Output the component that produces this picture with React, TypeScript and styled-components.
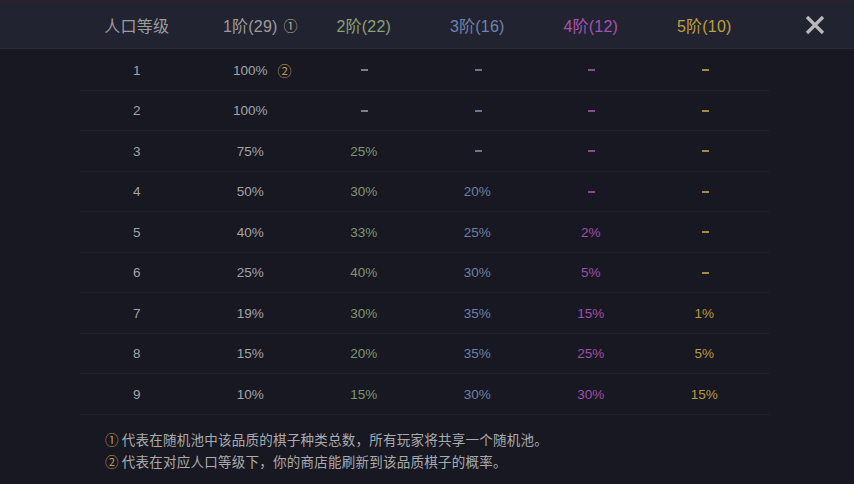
import styled, { createGlobalStyle } from 'styled-components';

const GlobalStyle = createGlobalStyle`
  body {
    margin: 0;
    background: #171821;
    font-family: 'Liberation Sans', 'Noto Sans CJK SC', sans-serif;
  }
`;

type Tier = 0 | 1 | 2 | 3 | 4 | 5;

const tierColors: Record<Tier, string> = {
  0: '#a4a4a6',
  1: '#a4a4a6',
  2: '#80966f',
  3: '#6c81a6',
  4: '#a14fa9',
  5: '#b89b3e',
};

const headColors: Record<Tier, string> = {
  0: '#9c9c9f',
  1: '#9c9c9f',
  2: '#8aa177',
  3: '#6d84ad',
  4: '#a852b0',
  5: '#bf9f3f',
};

const dashColors: Record<Tier, string> = {
  0: '#7d7d82',
  1: '#7d7d82',
  2: '#7d7d82',
  3: '#6a7690',
  4: '#8a4a93',
  5: '#a48c3e',
};

const heads = ['人口等级', '1阶(29)', '2阶(22)', '3阶(16)', '4阶(12)', '5阶(10)'];

const rows: string[][] = [
  ['1', '100%', '–', '–', '–', '–'],
  ['2', '100%', '–', '–', '–', '–'],
  ['3', '75%', '25%', '–', '–', '–'],
  ['4', '50%', '30%', '20%', '–', '–'],
  ['5', '40%', '33%', '25%', '2%', '–'],
  ['6', '25%', '40%', '30%', '5%', '–'],
  ['7', '19%', '30%', '35%', '15%', '1%'],
  ['8', '15%', '20%', '35%', '25%', '5%'],
  ['9', '10%', '15%', '30%', '30%', '15%'],
];

export default function App() {
  return (
    <>
      <GlobalStyle />
      <Page>
        <TopStrip />
        <Header>
          <HeadGrid>
            {heads.map((h, i) => (
              <HeadCell key={h} $tier={i as Tier}>
                <Value>
                  {h}
                  {i === 1 && <Mark $gold={false}>①</Mark>}
                </Value>
              </HeadCell>
            ))}
          </HeadGrid>
          <CloseButton aria-label="close">
            <svg width="22" height="22" viewBox="0 0 22 22">
              <path
                d="M3 3 L19 19 M19 3 L3 19"
                stroke="#b9b9bc"
                strokeWidth="3.2"
              />
            </svg>
          </CloseButton>
        </Header>
        <Table>
          {rows.map((r) => (
            <Row key={r[0]}>
              {r.map((v, i) => (
                <Cell key={i} $tier={i as Tier}>
                  {v === '–' ? (
                    <Dash $tier={i as Tier} />
                  ) : (
                    <Value>
                      {v}
                      {r[0] === '1' && i === 1 && <Mark $gold>②</Mark>}
                    </Value>
                  )}
                </Cell>
              ))}
            </Row>
          ))}
        </Table>
        <Notes>
          <Note>
            <NoteMark>①</NoteMark>代表在随机池中该品质的棋子种类总数，所有玩家将共享一个随机池。
          </Note>
          <Note>
            <NoteMark>②</NoteMark>代表在对应人口等级下，你的商店能刷新到该品质棋子的概率。
          </Note>
        </Notes>
      </Page>
    </>
  );
}

const Page = styled.div`
  width: 854px;
  height: 484px;
  overflow: hidden;
  background: #171821;
`;

const TopStrip = styled.div`
  height: 2px;
  background: #2b2129;
`;

const Header = styled.div`
  display: flex;
  align-items: center;
  height: 46px;
  background: #222330;
  border-bottom: 1px solid #2a2b38;
`;

const HeadGrid = styled.div`
  display: grid;
  grid-template-columns: repeat(6, 113.5px);
  margin-left: 80px;
`;

const HeadCell = styled.div<{ $tier: Tier }>`
  text-align: center;
  font-size: 16px;
  letter-spacing: 0.2px;
  color: ${(p) => headColors[p.$tier]};
`;

const Value = styled.span`
  position: relative;
  display: inline-block;
`;

const Mark = styled.span<{ $gold: boolean }>`
  position: absolute;
  left: 100%;
  top: 50%;
  transform: translateY(-50%);
  margin-left: ${(p) => (p.$gold ? '10px' : '6px')};
  font-family: 'Noto Sans CJK SC', sans-serif;
  font-size: 14px;
  line-height: 1;
  color: ${(p) => (p.$gold ? '#bf9b55' : '#b9ad8e')};
`;

const CloseButton = styled.div`
  display: flex;
  margin-left: auto;
  margin-right: 28px;
`;

const Table = styled.div`
  margin-left: 80px;
  width: 690px;
  padding-top: 1px;
`;

const Row = styled.div`
  display: grid;
  grid-template-columns: repeat(6, 113.5px);
  align-items: center;
  height: 40px;
  box-sizing: border-box;
  border-bottom: 1px solid #1e1f2a;

  &:nth-child(odd) {
    height: 41px;
  }
`;

const Cell = styled.div<{ $tier: Tier }>`
  display: flex;
  justify-content: center;
  align-items: center;
  font-size: 13.5px;
  color: ${(p) => tierColors[p.$tier]};
`;

const Dash = styled.span<{ $tier: Tier }>`
  display: block;
  width: 7px;
  height: 2px;
  background: ${(p) => dashColors[p.$tier]};
  margin-left: 2px;
`;

const Notes = styled.div`
  padding: 13px 0 0 105px;
`;

const Note = styled.div`
  font-family: 'Noto Sans CJK SC', sans-serif;
  font-size: 13.5px;
  line-height: 22px;
  letter-spacing: 0.25px;
  color: #ababad;
`;

const NoteMark = styled.span`
  color: #bf9b55;
  margin-right: 3px;
`;
